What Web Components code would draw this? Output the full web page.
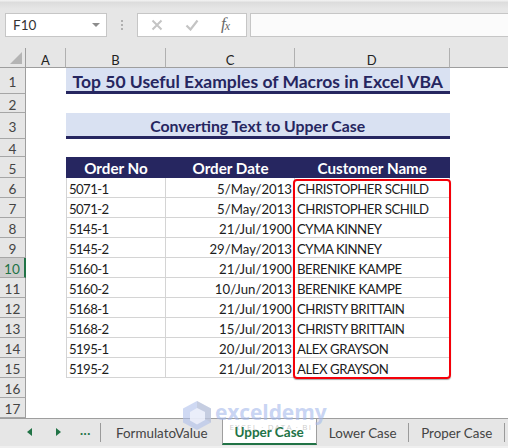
<!DOCTYPE html>
<html>
<head>
<meta charset="utf-8">
<title>Upper Case</title>
<style>
  html, body { margin: 0; height: 100%; background: #e6e6e6; }
  body { width: 508px; height: 448px; overflow: hidden; display: flex; flex-direction: column; position: relative; font-family: Lato, "Open Sans", sans-serif; }
</style>
</head>
<body>
<xl-formula-bar cell="F10"></xl-formula-bar>
<xl-sheet selected="10"></xl-sheet>
<xl-tabs>
  <xl-tab first>FormulatoValue</xl-tab>
  <xl-tab active>Upper Case</xl-tab>
  <xl-tab>Lower Case</xl-tab>
  <xl-tab>Proper Case</xl-tab>
</xl-tabs>
<xl-watermark></xl-watermark>

<script>
class XlFormulaBar extends HTMLElement {
  constructor() {
    super();
    this.attachShadow({ mode: "open" });
  }
  connectedCallback() {
    const cell = this.getAttribute("cell") || "";
    this.shadowRoot.innerHTML = `
      <style>
        :host { display: flex; align-items: flex-start; height: 48px; box-sizing: border-box; padding: 13px 0 0 5px; background: linear-gradient(#efefef 0, #f0f0f0 1px, #dcdcdc 2px, #e6e6e6 9px); }
        .box { height: 24px; box-sizing: border-box; background: #fff; border: 1px solid #c6c6c6; display: flex; align-items: center; }
        .name { width: 102px; padding: 0 6px 0 7px; justify-content: space-between; font-size: 13.5px; color: #333; }
        .name i { width: 0; height: 0; border: 4px solid transparent; border-top: 4px solid #8c8c8c; border-bottom: 0; }
        .dots { width: 30px; display: flex; flex-direction: column; align-items: center; gap: 2px; padding-top: 7px; }
        .dots b { width: 2px; height: 2px; background: #b0b0b0; }
        .fx { width: 110px; justify-content: space-between; padding: 0 13px; }
        .fx span { font: italic 17px/20px "Liberation Serif", serif; color: #6a6a6a; width: 12px; white-space: nowrap; margin-top: -2px; }
        .fx sub { font-size: 12px; line-height: 0; vertical-align: -1px; margin-left: -1px; }
        .input { flex: 1; margin-left: 3px; border-right: 0; background: #fbfbfb; }
        svg { display: block; }
      </style>
      <div class="box name"><span>${cell}</span><i></i></div>
      <div class="dots"><b></b><b></b><b></b></div>
      <div class="box fx">
        <svg width="12" height="12" viewBox="0 0 12 12"><path d="M1.500 1.500l9 9M10.500 1.500l-9 9" stroke="#c4c4c4" stroke-width="2" fill="none"/></svg>
        <svg width="14" height="12" viewBox="0 0 14 12"><path d="M1.500 6.500l4 4 7-9" stroke="#c4c4c4" stroke-width="2.200" fill="none"/></svg>
        <span>f<sub>x</sub></span>
      </div>
      <div class="box input"></div>
    `;
  }
}

const orders = [
  ["5071-1", "5/May/2013", "CHRISTOPHER SCHILD"],
  ["5071-2", "5/May/2013", "CHRISTOPHER SCHILD"],
  ["5145-1", "21/Jul/1900", "CYMA KINNEY"],
  ["5145-2", "29/May/2013", "CYMA KINNEY"],
  ["5160-1", "21/Jul/1900", "BERENIKE KAMPE"],
  ["5160-2", "10/Jun/2013", "BERENIKE KAMPE"],
  ["5168-1", "21/Jul/1900", "CHRISTY BRITTAIN"],
  ["5168-2", "15/Jul/2013", "CHRISTY BRITTAIN"],
  ["5195-1", "20/Jul/2013", "ALEX GRAYSON"],
  ["5195-2", "21/Jul/2013", "ALEX GRAYSON"]
];

class XlSheet extends HTMLElement {
  constructor() {
    super();
    this.attachShadow({ mode: "open" });
  }
  connectedCallback() {
    const selected = this.getAttribute("selected");
    const rowNum = n => `<div class="rh ${n == selected ? "sel" : ""}" style="grid-row:${n + 1}">${n}</div>`;
    let cells = "";
    for (let n = 1; n <= 17; n++) cells += rowNum(n);
    orders.forEach((o, i) => {
      const r = i + 7;
      cells += `<div class="c b" style="grid-row:${r};grid-column:3">${o[0]}</div>`;
      cells += `<div class="c r" style="grid-row:${r};grid-column:4">${o[1]}</div>`;
      cells += `<div class="c d" style="grid-row:${r};grid-column:5">${o[2]}</div>`;
    });
    this.shadowRoot.innerHTML = `
      <style>
        :host { display: grid; position: relative; background: #fff; color: #1c1c1c; font-size: 13.2px;
          grid-template-columns: 26px 40px 100px 129px 154.500px 1fr;
          grid-template-rows: 20px 26px 19px 26px 18px 21px repeat(12, 20px); }
        .corner, .ch, .rh { background: #e6e6e6; box-sizing: border-box; }
        .corner { grid-row: 1; grid-column: 1; border-right: 1px solid #9e9e9e; border-bottom: 1px solid #9e9e9e; display: flex; align-items: flex-end; justify-content: flex-end; padding: 0 3px 3px 0; }
        .corner i { width: 0; height: 0; border-left: 12px solid transparent; border-bottom: 12px solid #b4b4b4; }
        .ch { grid-row: 1; border-bottom: 1px solid #9e9e9e; border-right: 1px solid #b0b0b0; display: flex; align-items: center; justify-content: center; padding-top: 5px; font-size: 13px; color: #222; }
        .ch.end { border-right: 0; }
        .rh { grid-column: 1; border-bottom: 1px solid #a6a6a6; border-right: 1px solid #9e9e9e; display: flex; align-items: center; justify-content: center; padding-top: 3px; font-size: 13.600px; color: #444; }
        .rh.sel { background: #cdcdcd; color: #217346; border-right: 2px solid #217346; }
        .title { grid-column: 3 / 6; background: #d9e1f2; border-bottom: 3px solid #262660; color: #262660; font-weight: 700; display: flex; align-items: center; justify-content: center; box-sizing: border-box; white-space: nowrap; }
        .t1 { grid-row: 2; font-size: 17.500px; padding-top: 3px; }
        .t2 { grid-row: 4; font-size: 15.800px; padding-top: 2px; }
        .h { grid-row: 6; background: #262660; color: #fff; font-weight: 700; display: flex; align-items: center; justify-content: center; font-size: 15.200px; padding-top: 1px; box-sizing: border-box; }
        .c { box-sizing: border-box; border-bottom: 1px solid #d4d4d4; border-right: 1px solid #d4d4d4; display: flex; align-items: center; padding: 3px 2px 0 2px; white-space: nowrap; }
        .b { border-left: 1px solid #d4d4d4; letter-spacing: -.6px; }
        .r { justify-content: flex-end; }
        .d { letter-spacing: -.45px; padding-left: 2px; }
        .mark { position: absolute; left: 293px; top: 131px; width: 158px; height: 200px; box-sizing: border-box; border: 2px solid #f40009; border-radius: 4px; box-shadow: 0 1px 1px rgba(0,0,0,.35); }
      </style>
      <div class="corner"><i></i></div>
      <div class="ch" style="grid-column:2">A</div>
      <div class="ch" style="grid-column:3">B</div>
      <div class="ch" style="grid-column:4">C</div>
      <div class="ch" style="grid-column:5">D</div>
      <div class="ch end" style="grid-column:6"></div>
      <div class="title t1">Top 50 Useful Examples of Macros in Excel VBA</div>
      <div class="title t2">Converting Text to Upper Case</div>
      <div class="h" style="grid-column:3">Order No</div>
      <div class="h" style="grid-column:4">Order Date</div>
      <div class="h" style="grid-column:5">Customer Name</div>
      ${cells}
      <div class="mark"></div>
    `;
  }
}

class XlTab extends HTMLElement {
  constructor() {
    super();
    this.attachShadow({ mode: "open" });
    this.shadowRoot.innerHTML = `
      <style>
        :host { display: flex; align-items: center; height: 26px; box-sizing: border-box; padding: 2px 12.500px 0 12px; font-size: 13.400px; color: #444; white-space: nowrap; position: relative; }
        :host(:not([active]):not([first]))::after { content: ""; position: absolute; right: 0; top: 4px; height: 19px; width: 1px; background: #9a9a9a; }
        :host([first]) { padding-left: 12px; padding-right: 15px; }
        :host([active]) { background: #fff; color: #217346; font-weight: 700; font-size: 13.500px; border-bottom: 2px solid #217346; border-left: 1px solid #9e9e9e; border-right: 1px solid #9e9e9e; padding: 1px 12px 0 11px; }
      </style>
      <slot></slot>
    `;
  }
}

class XlTabs extends HTMLElement {
  constructor() {
    super();
    this.attachShadow({ mode: "open" });
    this.shadowRoot.innerHTML = `
      <style>
        :host { display: flex; flex: 1; align-items: flex-start; border-top: 1px solid #9e9e9e; background: #e6e6e6; box-shadow: inset 0 -2px 0 #efefef; box-sizing: border-box; overflow: hidden; }
        .nav { width: 100px; flex: none; height: 26px; display: flex; align-items: center; position: relative; }
        .nav svg { position: absolute; top: 9px; }
        .nav b { position: absolute; left: 80px; top: 3px; color: #217346; font-size: 13px; letter-spacing: .5px; }
        .sep { width: 1px; height: 19px; background: #9a9a9a; margin-top: 4px; flex: none; }
        .list { display: flex; padding-left: 3px; }
      </style>
      <div class="nav">
        <svg style="left:27px" width="5" height="8" viewBox="0 0 5 8"><path d="M5 0v8L0 4z" fill="#217346"/></svg>
        <svg style="left:56px" width="5" height="8" viewBox="0 0 5 8"><path d="M0 0v8l5-4z" fill="#217346"/></svg>
        <b>...</b>
      </div>
      <div class="sep"></div>
      <div class="list"><slot></slot></div>
    `;
  }
}

class XlWatermark extends HTMLElement {
  constructor() {
    super();
    this.attachShadow({ mode: "open" });
    this.shadowRoot.innerHTML = `
      <style>
        :host { position: absolute; left: 183px; top: 401px; width: 145px; height: 30px; pointer-events: none; display: flex; gap: 4px; }
        svg { flex: none; }
        .word { display: flex; flex-direction: column; align-items: center; flex: none; }
        .big { font: 700 21px/22px "Open Sans", sans-serif; color: rgba(165,185,235,.62); letter-spacing: -.1px; }
        .small { font: 8px/8px "Open Sans", sans-serif; color: rgba(150,150,150,.5); letter-spacing: 1.150px; white-space: nowrap; }
      </style>
      <svg width="28" height="29" viewBox="0 0 28 29">
        <path d="M14 0l14 7.500v14L14 29 0 21.500v-14z" fill="rgba(175,192,235,.6)"/>
        <path d="M14 0l14 7.500v14l-6-3.500v-7l-8-4z" fill="rgba(190,195,210,.55)"/>
        <path d="M14 7l8 4v8l-8 4.500-7-4V11z" fill="rgba(238,241,250,.85)"/>
      </svg>
      <div class="word"><span class="big">exceldemy</span><span class="small">EXCEL · DATA · BI</span></div>
    `;
  }
}

customElements.define("xl-formula-bar", XlFormulaBar);
customElements.define("xl-sheet", XlSheet);
customElements.define("xl-tab", XlTab);
customElements.define("xl-tabs", XlTabs);
customElements.define("xl-watermark", XlWatermark);
</script>
</body>
</html>
